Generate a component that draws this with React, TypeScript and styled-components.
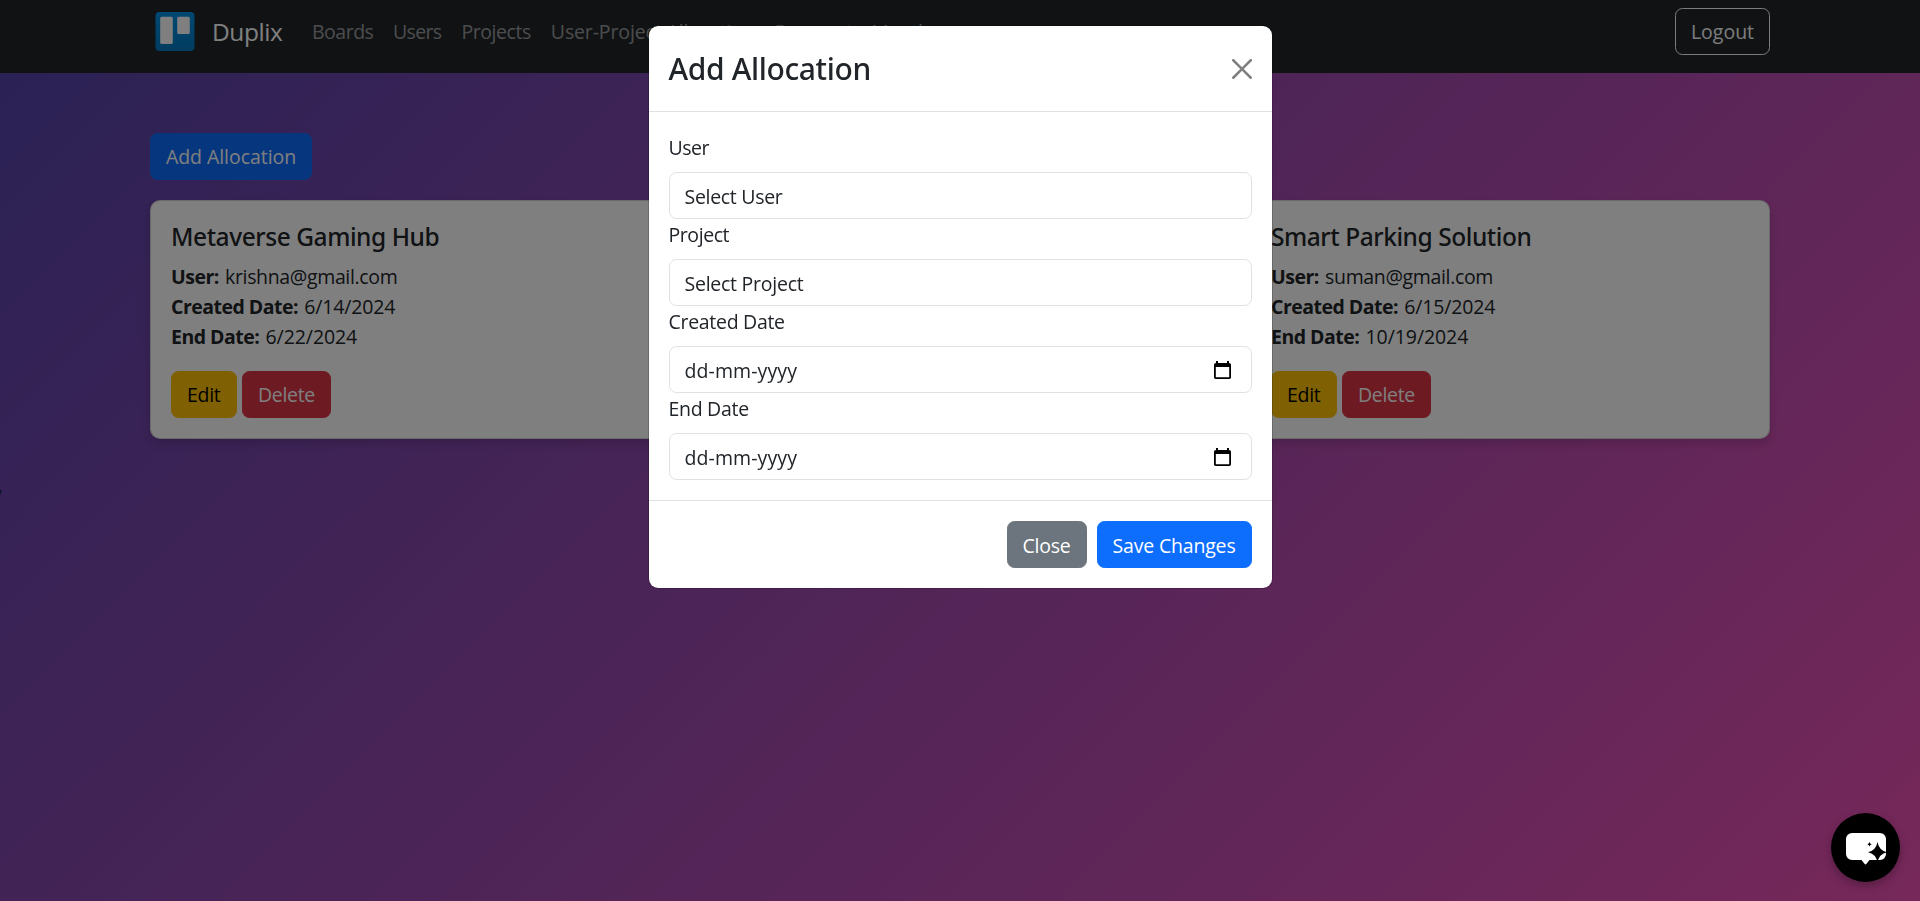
import React from "react";
import styled, { createGlobalStyle, css } from "styled-components";

const GlobalStyle = createGlobalStyle`
  *, *::before, *::after { box-sizing: border-box; }
  html, body { margin: 0; height: 100%; overflow: hidden; }
  body {
    font-family: "Open Sans", "Noto Sans", sans-serif;
    font-size: 19.5px;
    line-height: 30px;
    color: #212529;
    background: #5243aa;
  }
`;

const Page = styled.div`
  min-height: 100vh;
  background: linear-gradient(135deg, #5243aa, #ed50b4);
`;

/* Tracked text: `$ls` is the letter spacing in px. */
const Text = styled.span<{ $ls?: number }>`
  letter-spacing: ${(p) => p.$ls ?? 0}px;
`;

const Navbar = styled.nav`
  height: 73px;
  padding-bottom: 10px;
  background: #212529;
`;

const Container = styled.div`
  width: 1650px;
  margin: 0 auto;
  padding: 0 15px;
`;

const NavInner = styled(Container)`
  display: flex;
  align-items: center;
  height: 63px;
`;

const Brand = styled.a`
  display: flex;
  align-items: center;
  width: 132px;
  margin-right: 20px;
  padding-left: 5px;
  font-size: 24.5px;
  letter-spacing: -0.45px;
  color: #fff;
`;

const BrandName = styled.span`
  padding-top: 1px;
`;

const BrandLogo = styled.svg`
  width: 40px;
  height: 40px;
  margin-right: 17px;
  flex: none;
`;

const NavList = styled.div`
  display: flex;
  flex: 1;
`;

const NavLink = styled.a<{ $w: number; $ls: number }>`
  width: ${(p) => p.$w}px;
  padding-left: 10px;
  white-space: nowrap;
  letter-spacing: ${(p) => p.$ls}px;
  color: rgba(255, 255, 255, 0.55);
`;

const variants = {
  primary: css`background: #0d6efd; border-color: #0d6efd; color: #fff;`,
  secondary: css`background: #6c757d; border-color: #6c757d; color: #fff;`,
  warning: css`background: #ffc107; border-color: #ffc107; color: #000;`,
  danger: css`background: #dc3545; border-color: #dc3545; color: #fff;`,
  outline: css`background: transparent; border-color: #f8f9fa; color: #f8f9fa;`,
};

const Button = styled.button<{ $variant: keyof typeof variants; $w: number; $ls?: number }>`
  display: inline-flex;
  align-items: center;
  justify-content: center;
  width: ${(p) => p.$w}px;
  height: 47px;
  padding: 0;
  border: 1px solid;
  border-radius: 7.5px;
  font: inherit;
  letter-spacing: ${(p) => p.$ls ?? 0}px;
  white-space: nowrap;
  ${(p) => variants[p.$variant]}
`;

const FooterButton = styled(Button)`
  padding-top: 2px;
`;

const Main = styled(Container)`
  padding-top: 60px;
  padding-bottom: 30px;
`;

const CardGrid = styled.div`
  display: grid;
  grid-template-columns: repeat(3, 1fr);
  column-gap: 30px;
  margin-top: 20px;
`;

const Card = styled.article<{ $column: number }>`
  grid-column: ${(p) => p.$column};
  padding: 20px;
  background: #fff;
  border: 1px solid rgba(0, 0, 0, 0.175);
  border-radius: 10px;
  box-shadow: 0 5px 10px rgba(0, 0, 0, 0.15);
`;

const CardTitle = styled.h5`
  height: 30px;
  margin: 0 0 10px;
  font-family: "Noto Sans", sans-serif;
  font-size: 24.5px;
  font-weight: 500;
  line-height: 32px;
  letter-spacing: -0.44px;
`;

const CardLine = styled.div`
  display: flex;
  gap: 6.3px;
  height: 30px;
  line-height: 32px;
`;

const Label = styled.strong`
  font-weight: 700;
  letter-spacing: -0.52px;
`;

const CardActions = styled.div`
  display: flex;
  gap: 5.5px;
  margin-top: 20px;
`;

const Trailing = styled.div`
  margin-left: -2px;
  line-height: 32px;
`;

const Backdrop = styled.div`
  position: fixed;
  inset: 0;
  padding-top: 25px;
  background: rgba(0, 0, 0, 0.5);
`;

const Dialog = styled.section`
  width: 625px;
  margin: 0 auto;
  background: #fff;
  background-clip: padding-box;
  border: 1px solid rgba(0, 0, 0, 0.175);
  border-radius: 10px;
`;

const DialogHeader = styled.header`
  display: flex;
  align-items: center;
  justify-content: space-between;
  height: 86px;
  padding: 0 20px;
  border-bottom: 1px solid #dee2e6;
`;

const DialogTitle = styled.h4`
  margin: 0;
  font-family: "Noto Sans", sans-serif;
  font-size: 30px;
  font-weight: 500;
  line-height: 45px;
  letter-spacing: -0.36px;
`;

const CloseIcon = styled.svg`
  width: 20px;
  height: 20px;
  margin-top: 1px;
  opacity: 0.5;
`;

const DialogBody = styled.div`
  padding: 20px;
`;

const FieldLabel = styled.div`
  height: 30px;
  margin-bottom: 10px;
  line-height: 32px;
`;

const Control = styled.div`
  display: flex;
  align-items: center;
  justify-content: space-between;
  height: 47px;
  padding: 2px 20px 0 15px;
  border: 1px solid #dee2e6;
  border-radius: 7.5px;
`;

const CalendarIcon = styled.svg`
  width: 17px;
  height: 18px;
  margin-top: -2px;
`;

const DialogFooter = styled.footer`
  display: flex;
  justify-content: flex-end;
  gap: 10px;
  padding: 20px;
  border-top: 1px solid #dee2e6;
`;

const ChatButton = styled.button`
  position: fixed;
  right: 20px;
  bottom: 19px;
  width: 69px;
  height: 69px;
  padding: 0;
  border: 0;
  border-radius: 50%;
  background: #000;
  box-shadow: 0 4px 8px rgba(0, 0, 0, 0.25);
`;

const ChatGlyph = styled.svg`
  display: block;
  width: 69px;
  height: 69px;
`;

const links = [
  { label: "Boards", w: 81, ls: -0.5 },
  { label: "Users", w: 68.5, ls: -0.65 },
  { label: "Projects", w: 89.3, ls: -0.45 },
  { label: "User-Project Allocation", w: 224, ls: -0.13 },
  { label: "Payment", w: 96.5, ls: -0.4 },
  { label: "Month", w: 80, ls: -0.4 },
];

const allocations = [
  { title: "Metaverse Gaming Hub", user: "krishna@gmail.com", created: "6/14/2024", end: "6/22/2024", column: 1 },
  { title: "Smart Parking Solution", user: "suman@gmail.com", created: "6/15/2024", end: "10/19/2024", column: 3 },
];

const fields = [
  { label: "User", ls: -0.5, value: "Select User", vls: -0.3, date: false },
  { label: "Project", ls: -0.42, value: "Select Project", vls: -0.25, date: false },
  { label: "Created Date", ls: -0.3, value: "dd-mm-yyyy", vls: 0.1, date: true },
  { label: "End Date", ls: -0.3, value: "dd-mm-yyyy", vls: 0.1, date: true },
];

function Logo() {
  return (
    <BrandLogo viewBox="0 0 40 40">
      <defs>
        <linearGradient id="brand" x1="0" y1="0" x2="0" y2="1">
          <stop offset="0" stopColor="#0091e6" />
          <stop offset="1" stopColor="#0079bf" />
        </linearGradient>
      </defs>
      <rect x="0.5" y="0" width="39" height="39" rx="4" fill="url(#brand)" />
      <rect x="5.2" y="4.7" width="12.6" height="27.4" rx="1.5" fill="#fff" />
      <rect x="22.2" y="4.7" width="12.6" height="17.4" rx="1.5" fill="#fff" />
    </BrandLogo>
  );
}

function Calendar() {
  return (
    <CalendarIcon viewBox="0 0 17 18">
      <path
        fillRule="evenodd"
        d="M2 0h2v2h9V0h2v2c1 0 2 .8 2 1.800V16.300c0 1-.8 1.700-1.700 1.700H1.700C.8 18 0 17.300 0 16.300V3.800C0 2.800 1 2 2 2zM1.800 6v10.200h13.400V6z"
      />
    </CalendarIcon>
  );
}

export default function App() {
  return (
    <>
      <GlobalStyle />
      <Page>
        <Navbar>
          <NavInner>
            <Brand>
              <Logo />
              <BrandName>Duplix</BrandName>
            </Brand>
            <NavList>
              {links.map((l) => (
                <NavLink key={l.label} $w={l.w} $ls={l.ls}>{l.label}</NavLink>
              ))}
            </NavList>
            <Button $variant="outline" $w={95}>Logout</Button>
          </NavInner>
        </Navbar>
        <Main>
          <Button $variant="primary" $w={162} $ls={-0.05}>Add Allocation</Button>
          <CardGrid>
            {allocations.map((a) => (
              <Card key={a.title} $column={a.column}>
                <CardTitle>{a.title}</CardTitle>
                <CardLine><Label>User:</Label><Text $ls={-0.35}>{a.user}</Text></CardLine>
                <CardLine><Label>Created Date:</Label><Text $ls={-0.15}>{a.created}</Text></CardLine>
                <CardLine><Label>End Date:</Label><Text $ls={-0.08}>{a.end}</Text></CardLine>
                <CardActions>
                  <Button $variant="warning" $w={65.5} $ls={-0.25}>Edit</Button>
                  <Button $variant="danger" $w={89} $ls={-0.3}>Delete</Button>
                </CardActions>
              </Card>
            ))}
          </CardGrid>
        </Main>
        <Trailing>,</Trailing>
      </Page>
      <Backdrop>
        <Dialog role="dialog">
          <DialogHeader>
            <DialogTitle>Add Allocation</DialogTitle>
            <CloseIcon viewBox="0 0 16 16">
              <path d="M.293.293a1 1 0 0 1 1.414 0L8 6.586 14.293.293a1 1 0 1 1 1.414 1.414L9.414 8l6.293 6.293a1 1 0 0 1-1.414 1.414L8 9.414l-6.293 6.293a1 1 0 0 1-1.414-1.414L6.586 8 .293 1.707a1 1 0 0 1 0-1.414z" />
            </CloseIcon>
          </DialogHeader>
          <DialogBody>
            {fields.map((f) => (
              <div key={f.label}>
                <FieldLabel><Text $ls={f.ls}>{f.label}</Text></FieldLabel>
                <Control>
                  <Text $ls={f.vls}>{f.value}</Text>
                  {f.date && <Calendar />}
                </Control>
              </div>
            ))}
          </DialogBody>
          <DialogFooter>
            <FooterButton $variant="secondary" $w={80} $ls={-0.2}>Close</FooterButton>
            <FooterButton $variant="primary" $w={155} $ls={-0.18}>Save Changes</FooterButton>
          </DialogFooter>
        </Dialog>
      </Backdrop>
      <ChatButton aria-label="Chat">
        <ChatGlyph viewBox="0 0 69 69">
          <path
            fill="#fff"
            d="M21 20h28a6 6 0 0 1 6 6v15a6 6 0 0 1-6 6H38.500l-3 3.800q-1 1.200-2 0l-3-3.800H21a6 6 0 0 1-6-6v-15a6 6 0 0 1 6-6z"
          />
          <path d="M46.500 29q1.600 8.600 9.500 10.200q-7.900 1.600-9.500 10.200q-1.600-8.600-9.500-10.200q7.900-1.600 9.500-10.200z" />
          <path d="M38.500 29q.5 1.800 2.200 2.300q-1.700.5-2.200 2.300q-.5-1.800-2.200-2.300q1.700-.5 2.200-2.300z" />
        </ChatGlyph>
      </ChatButton>
    </>
  );
}
